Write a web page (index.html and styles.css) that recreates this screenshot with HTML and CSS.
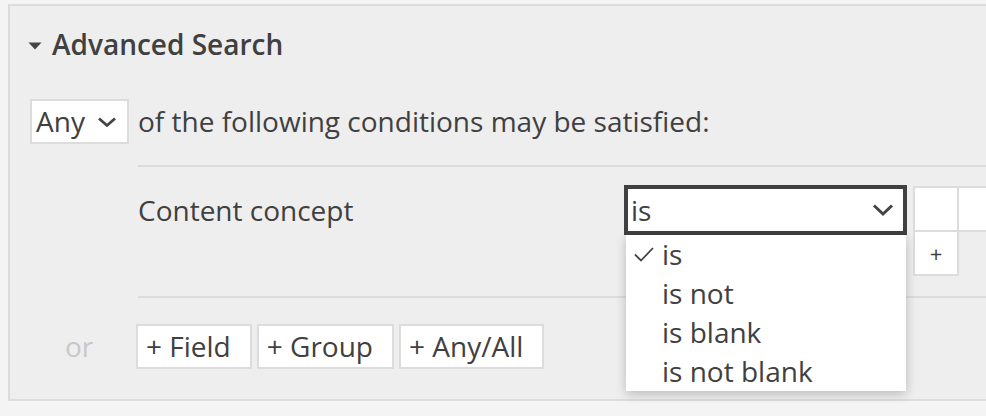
FILE: index.html
```html
<!DOCTYPE html>
<html lang="en">
<head>
<meta charset="utf-8">
<title>Advanced Search</title>
<link rel="stylesheet" href="styles.css">
</head>
<body>
<div class="panel">
  <h2 class="title">
    <svg class="caret" width="14" height="8" viewBox="0 0 14 8"><polygon points="0.5,0.5 13.5,0.5 7,7.5" fill="#444"/></svg>
    <span>Advanced Search</span>
  </h2>

  <div class="match-row">
    <div class="any-select">
      <span>Any</span>
      <svg class="chev-sm" width="20" height="12" viewBox="0 0 20 12"><polyline points="2,2.5 10,9.5 18,2.5" fill="none" stroke="#444" stroke-width="2.8"/></svg>
    </div>
    <span class="match-text">of the following conditions may be satisfied:</span>
  </div>

  <div class="group">
    <div class="or-col"></div>
    <div class="condition">
      <div class="cond-label">Content concept</div>
      <div class="op-wrap">
        <div class="op-select">
          <span>is</span>
          <svg class="chev" width="22" height="14" viewBox="0 0 22 14"><polyline points="2,2.5 11,11 20,2.5" fill="none" stroke="#444" stroke-width="3"/></svg>
        </div>
        <ul class="menu">
          <li class="selected"><svg class="check" width="20" height="16" viewBox="0 0 20 16"><polyline points="1,8.5 7,14.5 19,2" fill="none" stroke="#444" stroke-width="1.8"/></svg>is</li>
          <li>is not</li>
          <li>is blank</li>
          <li>is not blank</li>
        </ul>
      </div>
      <table class="values">
        <tr><td></td><td class="wide"></td></tr>
        <tr><td class="plus">+</td></tr>
      </table>
    </div>

    <div class="or-col"><span class="or">or</span></div>
    <div class="actions">
      <button class="btn">+ Field</button>
      <button class="btn">+ Group</button>
      <button class="btn">+ Any/All</button>
    </div>
  </div>
</div>
</body>
</html>
```

FILE: styles.css
```css
html, body {
  margin: 0;
  padding: 0;
}

body {
  background: #f4f4f4;
  font-family: "Open Sans", "Liberation Sans", sans-serif;
  font-size: 28px;
  color: #404040;
  width: 986px;
  height: 416px;
  overflow: hidden;
}

.panel {
  margin: 4px 0 0 8px;
  width: 1200px;
  box-sizing: border-box;
  background: #eeeeee;
  border: 2px solid #dcdcdc;
  padding: 0 0 30px 0;
}

.title {
  margin: 0;
  padding: 19px 0 0 18px;
  display: flex;
  align-items: center;
  font-size: 28px;
  font-weight: 600;
  line-height: 38px;
  color: #404040;
}

.caret {
  display: block;
  margin-right: 10px;
  margin-top: 4px;
}

.match-row {
  margin-top: 36px;
  padding-left: 20px;
  display: flex;
  align-items: center;
  height: 45px;
}

.any-select {
  box-sizing: border-box;
  height: 45px;
  width: 99px;
  border: 2px solid #dcdcdc;
  background: #fff;
  display: flex;
  align-items: center;
  padding-left: 4px;
  line-height: 41px;
}

.chev-sm {
  display: block;
  margin-left: 12px;
  margin-top: 1px;
}

.match-text {
  margin-left: 9px;
  line-height: 41px;
}

.group {
  margin-top: 21px;
  display: grid;
  grid-template-columns: 128px 1fr;
  grid-template-rows: auto 45px;
  row-gap: 26px;
}

.condition {
  border-top: 2px solid #dcdcdc;
  border-bottom: 2px solid #dcdcdc;
  padding: 18px 0 20px 0;
  display: flex;
  align-items: flex-start;
}

.cond-label {
  width: 486px;
  height: 50px;
  line-height: 50px;
}

.op-wrap {
  position: relative;
  width: 283px;
}

.op-select {
  box-sizing: border-box;
  height: 50px;
  border: 4px solid #404040;
  background: #fff;
  display: flex;
  align-items: center;
  justify-content: space-between;
  padding: 0 9px 0 3px;
  line-height: 42px;
}

.chev {
  display: block;
}

.menu {
  position: absolute;
  z-index: 5;
  top: 100%;
  left: 2px;
  width: 280px;
  margin: 0;
  padding: 0;
  list-style: none;
  background: #fff;
  box-shadow: 0 3px 10px rgba(0, 0, 0, 0.22);
}

.menu li {
  position: relative;
  height: 39px;
  line-height: 39px;
  padding-left: 36px;
}

.check {
  position: absolute;
  left: 8px;
  top: 11px;
}

.values {
  border-collapse: collapse;
  margin: 1px 0 0 6px;
}

.values td {
  width: 42px;
  height: 42px;
  padding: 0;
  border: 2px solid #dcdcdc;
  background: #fff;
}

.values td.plus {
  text-align: center;
  font-size: 22px;
  line-height: 42px;
}

.or-col {
  display: flex;
  align-items: center;
  padding-left: 55px;
}

.or {
  color: #c8c8c8;
  line-height: 45px;
}

.actions {
  display: flex;
  gap: 5px;
  margin-left: -2px;
}

.btn {
  box-sizing: border-box;
  height: 45px;
  margin: 0;
  border: 2px solid #dcdcdc;
  background: #fff;
  font-family: "Open Sans", "Liberation Sans", sans-serif;
  font-size: 28px;
  color: #404040;
  line-height: 41px;
  padding: 0 19px 0 8px;
  cursor: pointer;
}
```
